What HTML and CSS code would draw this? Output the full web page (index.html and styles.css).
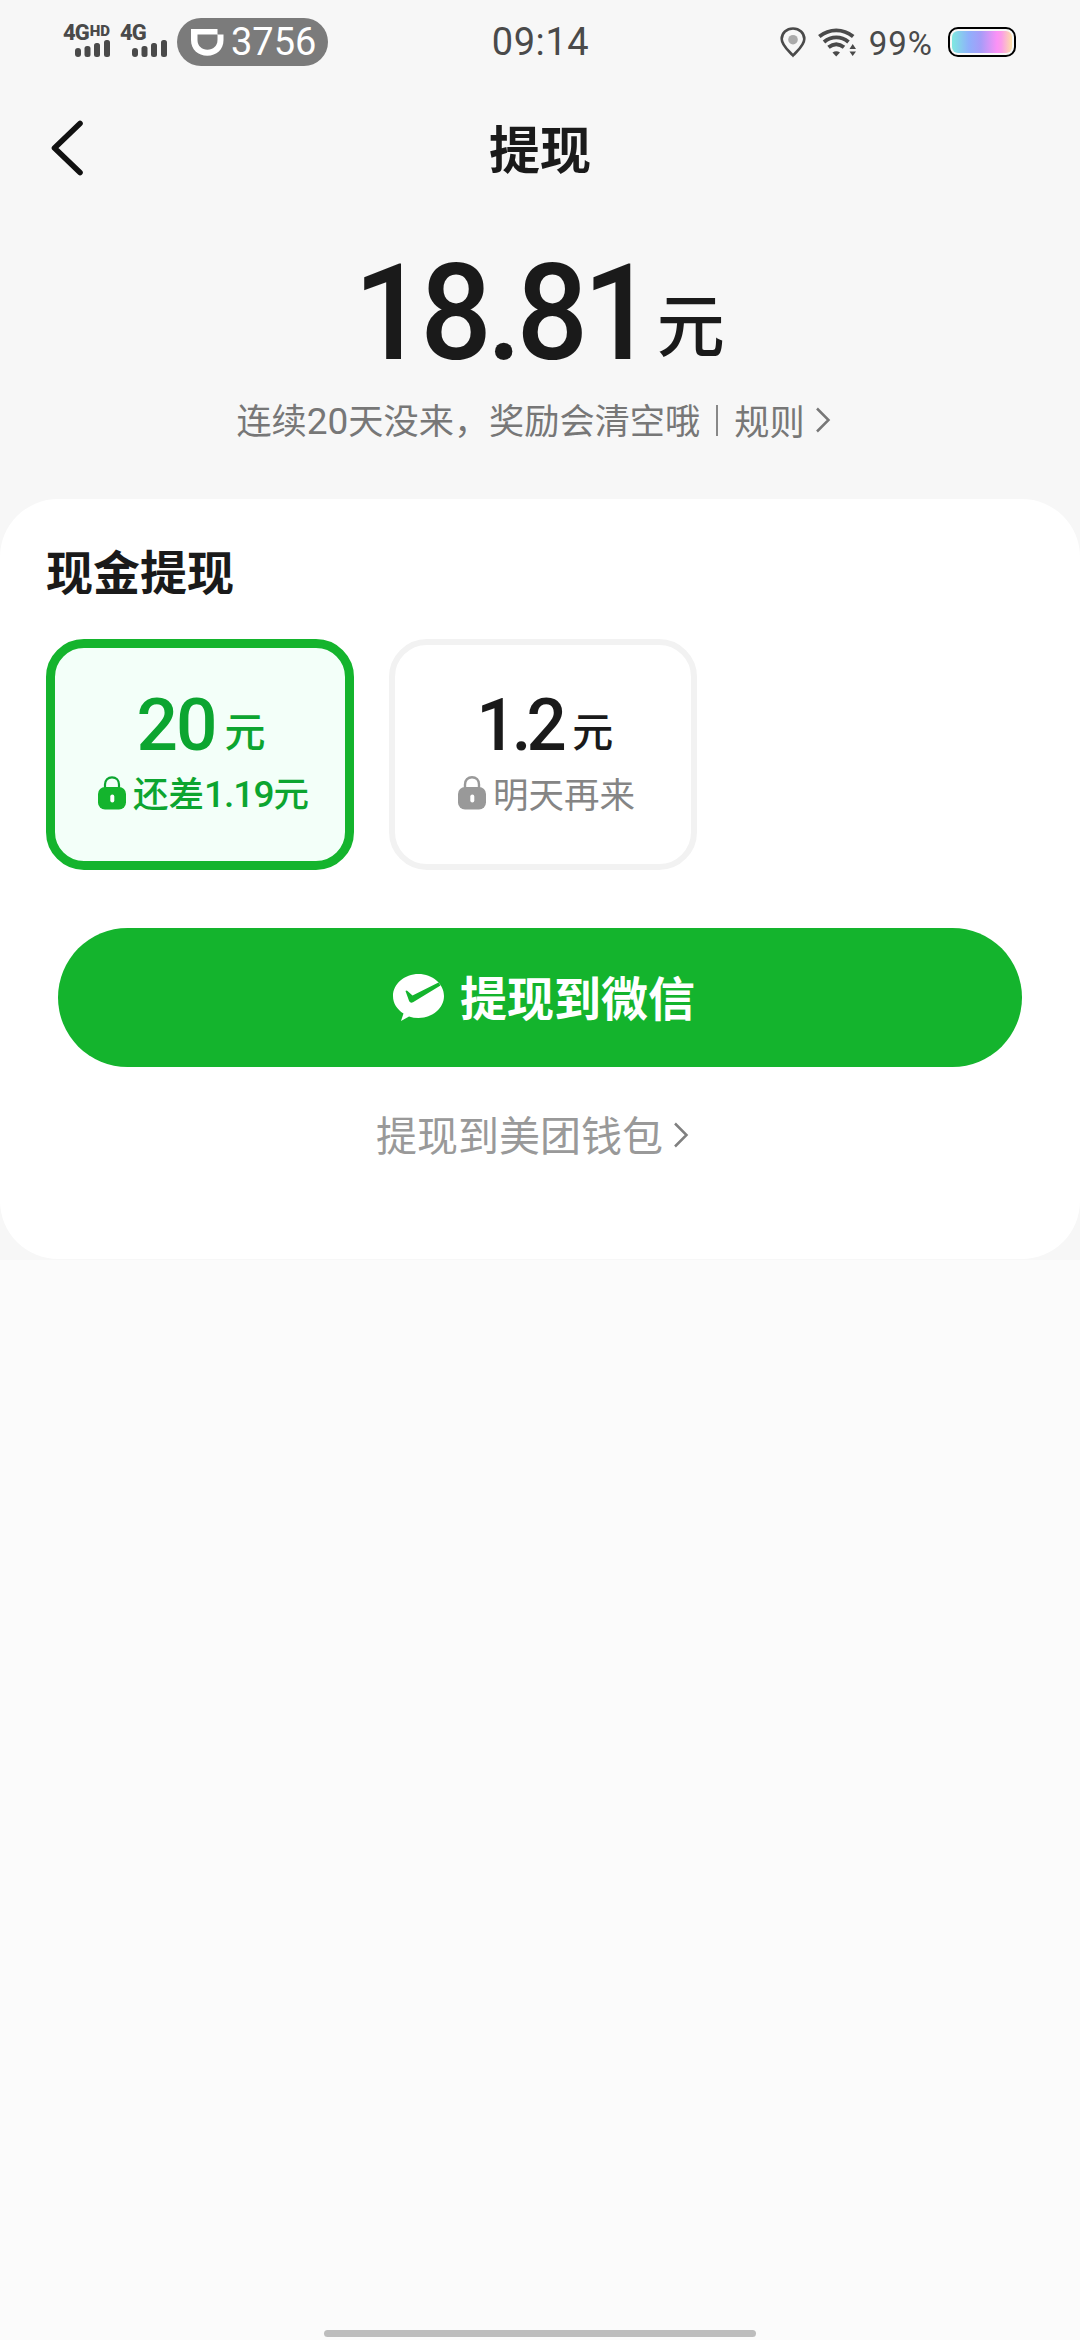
FILE: index.html
```html
<!DOCTYPE html>
<html lang="zh-CN">
<head>
<meta charset="UTF-8">
<title>提现</title>
<link rel="stylesheet" href="styles.css">
</head>
<body>
<div class="page">
  <header class="status">
    <div class="status-left">
      <div class="sim sim-hd">
        <div class="net">4G<span class="net-hd">HD</span></div>
        <svg class="bars" width="36" height="17" viewBox="0 0 36 17" fill="#4a4a4a"><rect x="0" y="8" width="6" height="9" rx="3"/><rect x="9.500" y="6" width="6" height="11" rx="2.500"/><rect x="19" y="3" width="6" height="14" rx="2.500"/><rect x="29" y="0" width="6" height="17" rx="2.500"/></svg>
      </div>
      <div class="sim">
        <div class="net">4G</div>
        <svg class="bars" width="36" height="17" viewBox="0 0 36 17" fill="#4a4a4a"><rect x="0" y="8" width="6" height="9" rx="3"/><rect x="9.500" y="6" width="6" height="11" rx="2.500"/><rect x="19" y="3" width="6" height="14" rx="2.500"/><rect x="29" y="0" width="6" height="17" rx="2.500"/></svg>
      </div>
      <div class="capsule">
        <svg width="33" height="27" viewBox="0 0 33 27"><path d="M0 0H26.500V5.500H32.500V11C32.500 20.500 25.500 26.700 16.300 26.700S0 20.500 0 11Z" fill="#fff"/><path d="M6.500 5.500H26.500V11C26.500 17 22 20.700 16.400 20.700S6.500 17 6.500 11Z" fill="#7b7b7b"/></svg>
        <span>3756</span>
      </div>
    </div>
    <div class="clock">09:14</div>
    <div class="status-right">
      <svg width="26" height="31" viewBox="0 0 26 31"><path d="M13 1.500C6.500 1.500 1.700 6 1.700 12C1.700 18.500 8.500 23.500 13 28.500C17.500 23.500 24.300 18.500 24.300 12C24.300 6 19.500 1.500 13 1.500Z" fill="none" stroke="#4a4a4a" stroke-width="2.600"/><circle cx="13" cy="12.700" r="4.800" fill="#aaa"/></svg>
      <svg class="wifi" width="39" height="31" viewBox="0 0 39 31"><g fill="none" stroke="#4a4a4a" stroke-width="3.900"><path d="M1.300 9.500C11.500 1.300 25 1.300 35.200 9.500"/><path d="M6 15C13.500 8.800 23 8.800 30.500 15"/><path d="M10.500 20.300C15.500 16.300 21 16.300 26 20.300"/></g><path d="M14.500 25.500Q18.200 23 22 25.500L18.200 29.500Z" fill="#4a4a4a"/><path d="M31.500 22L34.700 17L38 22ZM31.500 24.500H38L34.700 29Z" fill="#4a4a4a"/></svg>
      <span class="percent">99%</span>
      <div class="battery"><div class="charge"></div></div>
    </div>
  </header>

  <nav class="nav">
    <svg class="back" width="36" height="58" viewBox="0 0 36 58"><path d="M31 4.500L5.500 29L31 53.500" fill="none" stroke="#111" stroke-width="5.600" stroke-linecap="round" stroke-linejoin="round"/></svg>
    <h1>提现</h1>
  </nav>

  <section class="balance">
    <div class="total"><span class="total-num">18.81</span><span class="total-unit">元</span></div>
    <div class="note">
      <span>连续<span class="digits">20</span>天没来，奖励会清空哦</span>
      <i class="divider"></i>
      <span>规则</span>
      <svg class="note-arrow" width="16" height="26" viewBox="0 0 16 26"><path d="M2 1.500L13.500 13L2 24.500" fill="none" stroke="#777" stroke-width="2.500"/></svg>
    </div>
  </section>

  <main class="card">
    <h2>现金提现</h2>
    <div class="options">
      <div class="option selected">
        <div class="amount"><span class="num">20</span><span class="unit">元</span></div>
        <div class="hint">
          <svg width="28" height="34" viewBox="0 0 28 34"><path d="M7 14V8.500C7 4 10 1.300 14 1.300S21 4 21 8.500V14" fill="none" stroke="currentColor" stroke-width="2.200"/><rect y="11" width="28" height="22.500" rx="7" fill="#14b42d"/><rect x="12.300" y="18.500" width="4" height="8" rx="2" fill="#fff"/></svg>
          <span>还差<span class="digits">1.19</span>元</span>
        </div>
      </div>
      <div class="option">
        <div class="amount"><span class="num num-tight">1.2</span><span class="unit">元</span></div>
        <div class="hint">
          <svg width="28" height="34" viewBox="0 0 28 34"><path d="M7 14V8.500C7 4 10 1.300 14 1.300S21 4 21 8.500V14" fill="none" stroke="#999" stroke-width="2.400"/><rect y="11" width="28" height="22.500" rx="7" fill="#999"/><rect x="12.300" y="18.500" width="4" height="8" rx="2" fill="#fff"/></svg>
          <span>明天再来</span>
        </div>
      </div>
    </div>
    <button class="primary">
      <svg width="51" height="47" viewBox="0 0 51 47"><path d="M25.500 0C39.500 0 51 9.800 51 22S39.500 44 25.500 44Q20.500 44 16 42.500L8 47L10.500 39.500C4 35.500 0 29.200 0 22C0 9.800 11.500 0 25.500 0Z" fill="#fff"/><path d="M12.500 17Q13.500 15.800 14.500 17L19.500 21.500L45.500 8.500L47.500 11.500L20 28.300Q17.500 29.500 16.200 27.300Z" fill="#14b42d"/></svg>
      <span>提现到微信</span>
    </button>
    <div class="wallet">
      <span>提现到美团钱包</span>
      <svg width="16" height="28" viewBox="0 0 16 28"><path d="M2 2.500L13.500 14L2 25.500" fill="none" stroke="#808080" stroke-width="2.500"/></svg>
    </div>
  </main>
  <div class="home-bar"></div>
</div>
</body>
</html>
```

FILE: styles.css
```css
* { box-sizing: border-box; margin: 0; padding: 0; }

body {
  width: 1080px;
  height: 2340px;
  background: linear-gradient(#f7f7f7 1260px, #fbfbfb 1260px);
  font-family: "Noto Sans CJK SC", sans-serif;
  color: #1a1a1a;
}

svg { display: block; flex: none; }

.page { display: flex; flex-direction: column; height: 2340px; }

.status {
  display: grid;
  grid-template-columns: 1fr auto 1fr;
  height: 96px;
  padding: 0 64px 0 63px;
  color: #4a4a4a;
  font-family: Roboto, sans-serif;
}
.status-left { display: flex; align-items: flex-start; padding-top: 18px; }
.sim { width: 48px; margin-right: 9px; padding-top: 6px; }
.net { height: 16px; font-size: 22px; line-height: 18px; font-weight: 800; letter-spacing: -1px; white-space: nowrap; }
.net-hd { display: inline-block; margin-left: 1px; font-size: 15px; font-weight: 900; letter-spacing: 0; vertical-align: 4px; line-height: 10px; }
.bars { margin-left: 12px; }
.capsule {
  display: flex;
  align-items: center;
  gap: 7px;
  width: 151px;
  height: 48px;
  padding-left: 14px;
  border-radius: 24px;
  background: #7b7b7b;
  color: #fff;
  font-size: 38px;
  line-height: 48px;
}
.clock { padding: 17px 0 0 2px; font-size: 38px; line-height: 50px; letter-spacing: .6px; }
.status-right { display: flex; justify-content: flex-end; align-items: flex-start; padding-top: 27px; }
.wifi { margin: 0 12px; }
.percent { margin-right: 15px; font-size: 33px; line-height: 33px; letter-spacing: 1px; }
.battery { width: 68px; height: 30px; padding: 2px; border: 2px solid #000; border-radius: 10px; }
.charge { height: 22px; border-radius: 6px; background: linear-gradient(90deg, #7fe9e0, #8fb0fb 28%, #a79cf8 48%, #fb92f6 75%, #fb9bea 82%, #fce0a8); }

.nav { display: grid; grid-template-columns: 1fr auto 1fr; align-items: center; height: 104px; padding: 0 49px; }
h1 { margin-top: -3px; font-size: 51px; font-weight: 700; line-height: 74px; }

.balance { display: flex; flex-direction: column; align-items: center; height: 299px; padding-top: 29px; }
.total { display: flex; align-items: baseline; height: 165px; padding-right: 20px; line-height: 170px; font-weight: 500; }
.total-num { font-family: Roboto, sans-serif; font-size: 134px; letter-spacing: -5.5px; transform: scaleX(.94); transform-origin: right; }
.total-unit { margin-left: 7px; font-size: 68px; transform: translateY(-8px); }
.note { display: flex; align-items: center; height: 52px; padding-right: 13px; color: #777; font-size: 35.2px; line-height: 52px; }
.digits { font-family: Roboto, sans-serif; font-size: 37px; }
.divider { width: 2px; height: 31px; margin: 0 16px; background: #888; }
.note-arrow { margin-left: 10px; }

.card { height: 760px; padding: 37px 46px 0; border-radius: 58px; background: #fff; }
h2 { font-size: 47px; line-height: 68px; font-weight: 700; }
.options { display: flex; gap: 35px; margin-top: 35px; }
.option { width: 308px; height: 231px; padding-top: 42px; border: 6px solid #f2f2f2; border-radius: 38px; }
.selected { padding-top: 39px; border: 9px solid #14b42d; background: #f3fff9; color: #0ca530; }
.amount { display: flex; justify-content: center; align-items: baseline; height: 76px; padding-left: 2px; line-height: 76px; font-weight: 500; }
.num { font-family: Roboto, sans-serif; font-size: 73px; letter-spacing: -2px; }
.num-tight { letter-spacing: -5px; transform: scaleX(.97); }
.unit { margin-left: 9px; font-size: 41px; transform: translateY(-3px); }
.hint { display: flex; justify-content: center; align-items: center; gap: 7px; height: 52px; margin-top: 4px; padding-left: 7px; color: #858585; font-size: 35.5px; line-height: 52px; }
.hint .digits { letter-spacing: -1px; }
.selected .hint { color: #0ca530; font-weight: 500; }
.primary {
  display: flex;
  justify-content: center;
  align-items: center;
  gap: 16px;
  width: 964px;
  height: 139px;
  margin: 58px 12px 0;
  padding-left: 8px;
  border: 0;
  border-radius: 70px;
  background: #14b42d;
  color: #fff;
  font: 700 47px/68px "Noto Sans CJK SC", sans-serif;
}
.primary span { margin-top: -3px; }
.wallet { display: flex; justify-content: center; align-items: center; gap: 10px; height: 60px; margin-top: 38px; padding-right: 15px; color: #999; font-size: 41px; line-height: 60px; }
.wallet span { margin-top: -4px; }

.home-bar { width: 432px; height: 7px; margin: auto auto 3px; border-radius: 4px; background: #bdbdbd; }
```
